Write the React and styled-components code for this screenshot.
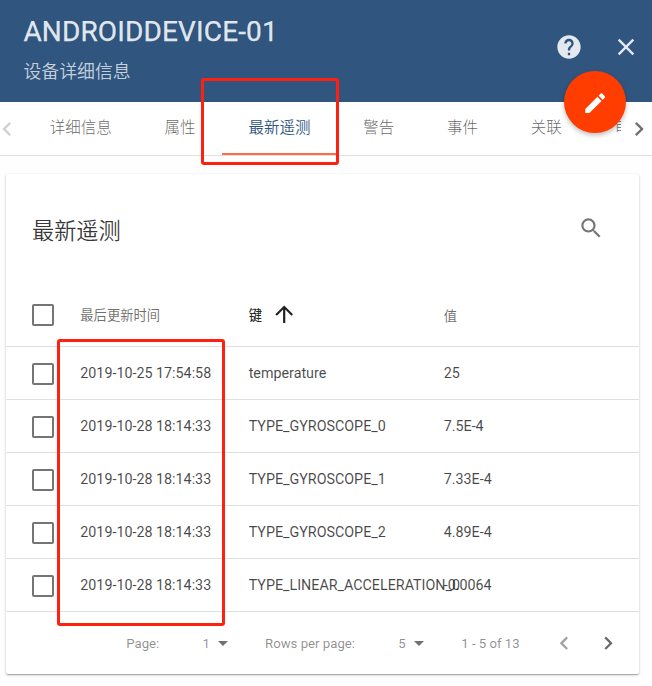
import React from 'react';
import styled, { createGlobalStyle } from 'styled-components';
import {
  MdHelp, MdClose, MdEdit, MdSearch, MdArrowUpward, MdChevronLeft, MdChevronRight,
} from 'react-icons/md';

const GlobalStyle = createGlobalStyle`
  *, *::before, *::after { box-sizing: border-box; }
  html, body { margin: 0; height: 100%; overflow: hidden; background: #fff; }
  body { font-family: Roboto, "Noto Sans CJK SC", sans-serif; color: rgba(0, 0, 0, 0.87); }
  h2, h3 { margin: 0; font-weight: 400; }
  button { padding: 0; border: 0; background: none; font: inherit; color: inherit; display: grid; place-items: center; }
  svg { display: block; flex: none; }
`;

const Page = styled.div`
  position: relative;
  width: 652px;
  height: 686px;
  overflow: hidden;
  background: #fefefe;
`;

const Header = styled.header`
  display: flex;
  justify-content: space-between;
  height: 102px;
  padding: 0 12px 0 23.4px;
  background: #305680;
  color: rgba(255, 255, 255, 0.87);
`;

const HeaderText = styled.div`
  display: flex;
  flex-direction: column;
  padding-top: 15px;
`;

const DeviceName = styled.h2`
  font-size: 28px;
  line-height: 33px;
  font-weight: 400;
  letter-spacing: 0.005em;
  white-space: nowrap;
  -webkit-text-stroke: 0.25px currentColor;
`;

const Subtitle = styled.span`
  margin-top: 11px;
  font-size: 17.9px;
  line-height: 26px;
  font-weight: 350;
  color: rgba(255, 255, 255, 0.74);
`;

const HeaderActions = styled.div`
  display: flex;
  gap: 29px;
  padding: 32.5px 0 0;
  height: 60.5px;
  font-size: 28px;
`;

const TabBar = styled.nav`
  display: flex;
  align-items: stretch;
  height: 54px;
  border-bottom: 1px solid #e0e0e0;
  background: #fff;
`;

const TabArrow = styled.button`
  flex: none;
  width: ${(p) => (p.$end ? '31px' : '23.4px')};
  justify-items: start;
  color: ${(p) => (p.$disabled ? '#d0d0d0' : '#707070')};
  font-size: 28px;

  svg {
    margin-left: ${(p) => (p.$end ? '3.5px' : '-7.5px')};
  }
`;

const TabViewport = styled.div`
  display: flex;
  flex: 1;
  min-width: 0;
  overflow: hidden;
`;

const Tab = styled.button`
  flex: none;
  padding: 0 26.4px 5px;
  font-size: 15.5px;
  font-weight: ${(p) => (p.$active ? 350 : 300)};
  white-space: nowrap;
  color: ${(p) => (p.$active ? '#305680' : 'rgba(0, 0, 0, 0.62)')};
  box-shadow: ${(p) => (p.$active ? 'inset 0 -2px #ff6e40' : 'none')};
`;

const Card = styled.section`
  width: 633px;
  height: 500px;
  margin: 18px 0 0 6px;
  border-radius: 2px;
  background: #fff;
  box-shadow: 0 1px 3px rgba(0, 0, 0, 0.2), 0 1px 1px rgba(0, 0, 0, 0.14), 0 2px 1px -1px rgba(0, 0, 0, 0.12);
`;

const CardHeader = styled.div`
  display: flex;
  justify-content: space-between;
  align-items: center;
  height: 109px;
  padding: 0 35px 0 26px;
`;

const CardTitle = styled.h3`
  font-size: 22.2px;
  font-weight: 350;
  color: rgba(0, 0, 0, 0.8);
`;

const SearchButton = styled.button`
  font-size: 26.4px;
  color: #757575;
`;

const TableRow = styled.div`
  display: grid;
  grid-template-columns: 48.3px 168.4px 195px 1fr;
  align-items: center;
  height: ${(p) => (p.$head ? '64px' : '53px')};
  padding-left: 26px;
  border-bottom: 1px solid #e0e0e0;
`;

const Checkbox = styled.span`
  width: 22px;
  height: 22px;
  margin-top: 1px;
  border: 2px solid #757575;
  border-radius: 2px;
`;

const HeadCell = styled.span`
  display: flex;
  align-items: center;
  gap: 9px;
  padding-top: ${(p) => (p.$lowered ? '2px' : 0)};
  font-size: 13.3px;
  font-weight: ${(p) => (p.$sorted ? 500 : 400)};
  color: ${(p) => (p.$sorted ? 'rgba(0, 0, 0, 0.87)' : 'rgba(0, 0, 0, 0.58)')};
`;

const Cell = styled.span`
  font-size: 14.3px;
  white-space: nowrap;
  color: rgba(0, 0, 0, 0.72);
`;

const Pagination = styled.footer`
  display: flex;
  align-items: center;
  height: 62px;
  padding-left: 120.3px;
  font-size: 13.2px;
  color: rgba(0, 0, 0, 0.45);
`;

const PageLabel = styled.span`
  white-space: nowrap;
`;

const Picker = styled.button`
  display: flex;
  align-items: center;
  gap: 8px;
  margin: 0 ${(p) => p.$after}px 0 43.3px;
`;

const Caret = styled.span`
  border: 5px solid transparent;
  border-top-color: #707070;
  border-bottom: 0;
`;

const PageArrow = styled.button`
  font-size: 26.4px;
  color: ${(p) => (p.$disabled ? '#a0a0a0' : '#686868')};
  margin-left: ${(p) => (p.$disabled ? 31.5 : 17.8)}px;
`;

const EditFab = styled.button`
  position: absolute;
  left: 564px;
  top: 71px;
  width: 62px;
  height: 62px;
  border-radius: 50%;
  background: #ff3d00;
  color: #fff;
  font-size: 26.4px;
  padding-top: 3px;
  box-shadow: 0 2px 5px rgba(0, 0, 0, 0.28);
`;

const Highlight = styled.div`
  position: absolute;
  border: 3px solid #ff2010;
  border-radius: 3px;
  pointer-events: none;
`;

const TabHighlight = styled(Highlight)`
  left: 201px;
  top: 78px;
  width: 138px;
  height: 87px;
`;

const TimeHighlight = styled(Highlight)`
  left: 57px;
  top: 339px;
  width: 168px;
  height: 287px;
`;

const tabs = ['详细信息', '属性', '最新遥测', '警告', '事件', '关联', '审计日志'];
const activeTab = '最新遥测';

const telemetry = [
  ['2019-10-25 17:54:58', 'temperature', '25'],
  ['2019-10-28 18:14:33', 'TYPE_GYROSCOPE_0', '7.5E-4'],
  ['2019-10-28 18:14:33', 'TYPE_GYROSCOPE_1', '7.33E-4'],
  ['2019-10-28 18:14:33', 'TYPE_GYROSCOPE_2', '4.89E-4'],
  ['2019-10-28 18:14:33', 'TYPE_LINEAR_ACCELERATION_0', '-0.0064'],
];

export default function App() {
  return (
    <>
      <GlobalStyle />
      <Page>
        <Header>
          <HeaderText>
            <DeviceName>ANDROIDDEVICE-01</DeviceName>
            <Subtitle>设备详细信息</Subtitle>
          </HeaderText>
          <HeaderActions>
            <button aria-label="help"><MdHelp /></button>
            <button aria-label="close"><MdClose /></button>
          </HeaderActions>
        </Header>

        <TabBar>
          <TabArrow $disabled aria-label="previous tabs"><MdChevronLeft /></TabArrow>
          <TabViewport>
            {tabs.map((name) => (
              <Tab key={name} $active={name === activeTab}>{name}</Tab>
            ))}
          </TabViewport>
          <TabArrow $end aria-label="next tabs"><MdChevronRight /></TabArrow>
        </TabBar>

        <Card>
          <CardHeader>
            <CardTitle>最新遥测</CardTitle>
            <SearchButton aria-label="search"><MdSearch /></SearchButton>
          </CardHeader>
          <TableRow $head>
            <Checkbox />
            <HeadCell>最后更新时间</HeadCell>
            <HeadCell $sorted>键<MdArrowUpward size={26.4} /></HeadCell>
            <HeadCell $lowered>值</HeadCell>
          </TableRow>
          {telemetry.map(([time, key, value]) => (
            <TableRow key={key}>
              <Checkbox />
              <Cell>{time}</Cell>
              <Cell>{key}</Cell>
              <Cell>{value}</Cell>
            </TableRow>
          ))}
          <Pagination>
            <PageLabel>Page:</PageLabel>
            <Picker $after={37}>1<Caret /></Picker>
            <PageLabel>Rows per page:</PageLabel>
            <Picker $after={37.5}>5<Caret /></Picker>
            <PageLabel>1 - 5 of 13</PageLabel>
            <PageArrow $disabled aria-label="previous page"><MdChevronLeft /></PageArrow>
            <PageArrow aria-label="next page"><MdChevronRight /></PageArrow>
          </Pagination>
        </Card>

        <EditFab aria-label="edit"><MdEdit /></EditFab>
        <TabHighlight />
        <TimeHighlight />
      </Page>
    </>
  );
}
